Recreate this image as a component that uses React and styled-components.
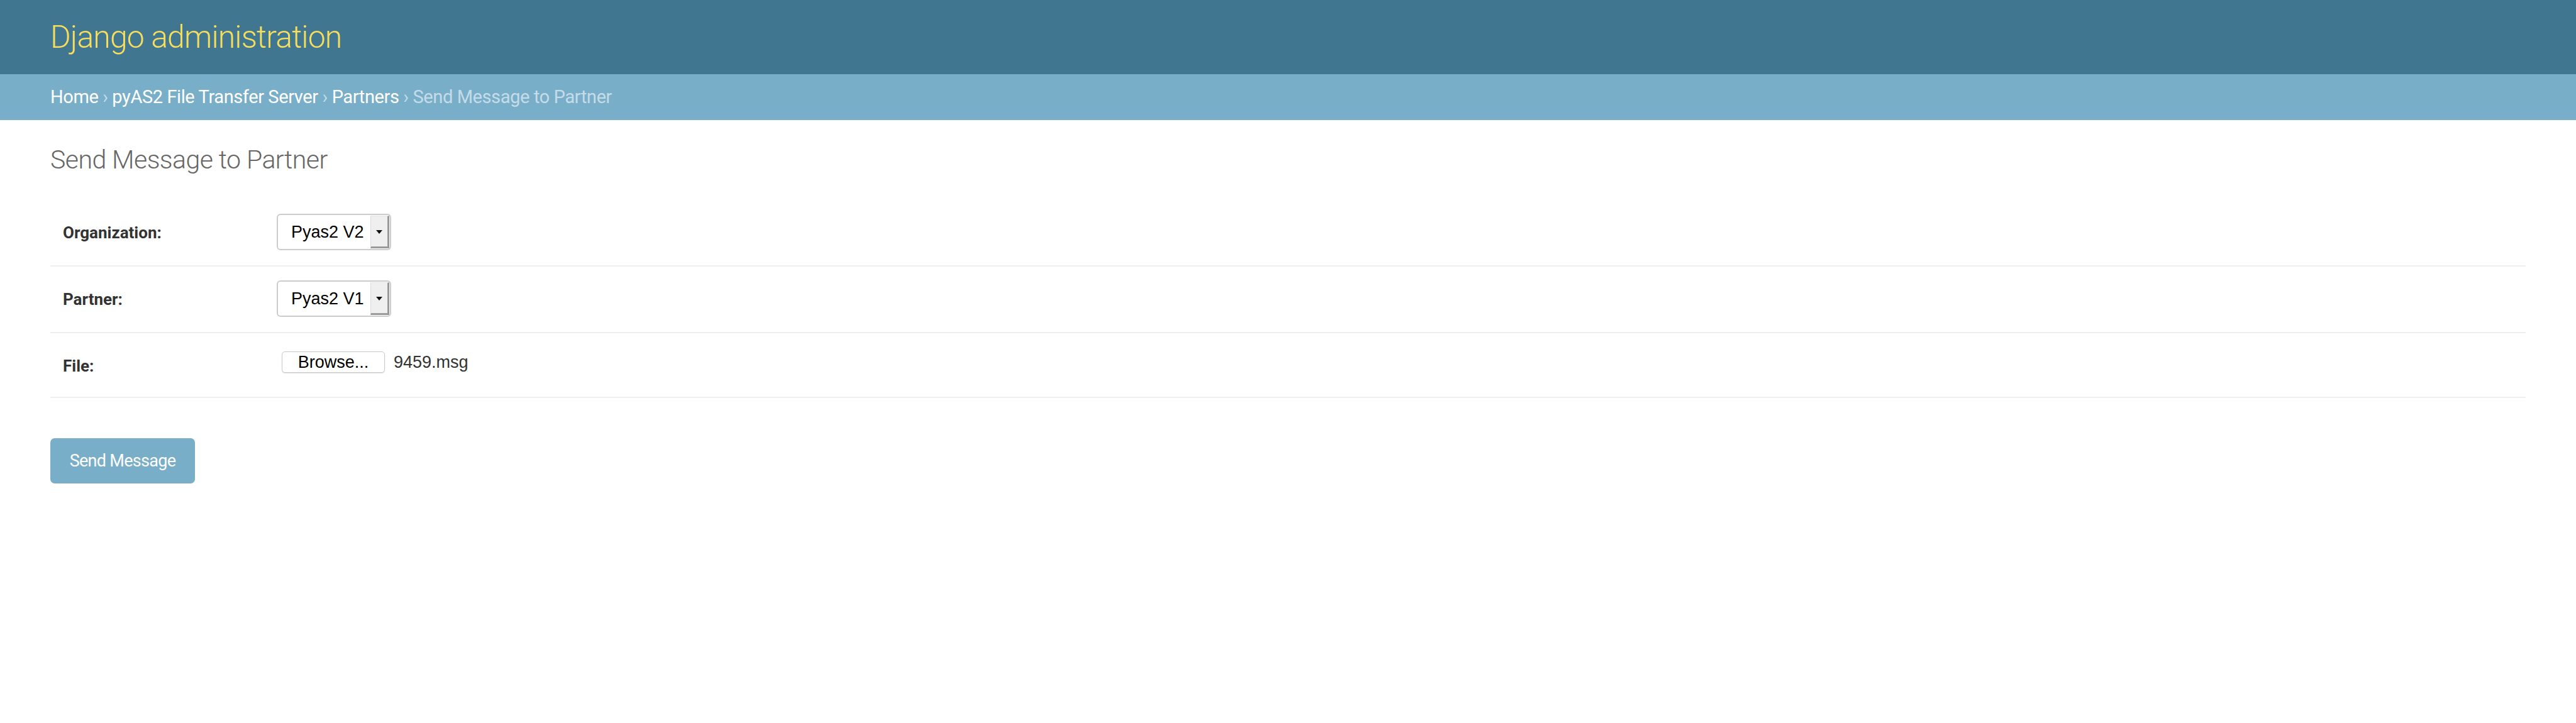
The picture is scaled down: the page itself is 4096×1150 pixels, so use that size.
import React from "react";
import styled, { createGlobalStyle } from "styled-components";

const GlobalStyle = createGlobalStyle`
  html, body {
    margin: 0;
    padding: 0;
    background: #ffffff;
    font-family: Roboto, "Liberation Sans", Arial, sans-serif;
    color: #333333;
  }
  * { box-sizing: border-box; }
`;

const Header = styled.header`
  background: #417690;
  height: 118px;
  padding: 30px 80px 0;
`;

const Branding = styled.h1`
  margin: 0;
  font-family: Roboto, sans-serif;
  font-weight: 300;
  font-size: 50px;
  line-height: 59px;
  letter-spacing: -0.9px;
  color: #f5dd5d;
`;

const Breadcrumbs = styled.nav`
  background: #79aec8;
  height: 73px;
  padding: 19px 80px 0;
  font-family: Roboto, sans-serif;
  font-size: 29px;
  line-height: 34px;
  letter-spacing: -0.4px;
  color: #c4dce8;
  white-space: pre;
`;

const Crumb = styled.a`
  color: #ffffff;
  text-decoration: none;
`;

const Content = styled.main`
  padding: 39px 80px 0;
`;

const Title = styled.h1`
  margin: 0 0 40px;
  font-family: Roboto, sans-serif;
  font-weight: 300;
  font-size: 41px;
  line-height: 48px;
  letter-spacing: -0.55px;
  color: #666666;
`;

const Fieldset = styled.fieldset`
  margin: 0;
  padding: 0;
  border: none;
  min-width: 0;
`;

const Row = styled.div`
  display: flex;
  align-items: flex-start;
  padding: 22px 20px ${(p) => p.$pb ?? 24}px;
  border-bottom: 2px solid #eeeeee;
`;

const Label = styled.label`
  width: 340px;
  flex-shrink: 0;
  font-family: Roboto, sans-serif;
  font-weight: 700;
  font-size: 26px;
  line-height: 60px;
  height: 58px;
  color: #333333;
`;

const SelectBox = styled.div`
  display: flex;
  align-items: stretch;
  width: 182px;
  height: 58px;
  border: 2px solid #cccccc;
  border-radius: 6px;
  background: #ffffff;
  overflow: hidden;
`;

const SelectValue = styled.span`
  flex: 1;
  display: flex;
  align-items: center;
  padding: 0 0 0 21px;
  font-family: "Liberation Sans", Arial, sans-serif;
  font-size: 27px;
  color: #000000;
  white-space: nowrap;
`;

const ArrowBox = styled.span`
  width: 30px;
  margin: 1px 1px 1px 0;
  display: flex;
  align-items: center;
  justify-content: center;
  background: #efefef;
  border-left: 1px solid #dcdcdc;
  border-top: 1px solid #e4e4e4;
  border-right: 3px solid #9a9a9a;
  border-bottom: 3px solid #9a9a9a;
`;

const Caret = styled.span`
  width: 0;
  height: 0;
  border-left: 5px solid transparent;
  border-right: 5px solid transparent;
  border-top: 6px solid #111111;
  margin-top: 2px;
`;

const FileField = styled.div`
  display: flex;
  align-items: center;
  margin-top: 7px;
  padding-left: 8px;
`;

const BrowseButton = styled.span`
  display: inline-flex;
  align-items: center;
  justify-content: center;
  width: 164px;
  height: 34px;
  border: 1px solid #c9c9c9;
  border-radius: 5px;
  background: #ffffff;
  box-shadow: 0 1px 1px rgba(0, 0, 0, 0.12);
  font-family: "Liberation Sans", Arial, sans-serif;
  font-size: 27px;
  color: #000000;
`;

const FileName = styled.span`
  margin-left: 14px;
  font-family: "Liberation Sans", Arial, sans-serif;
  font-size: 27px;
  color: #333333;
`;

const SubmitRow = styled.div`
  margin-top: 64px;
`;

const SubmitButton = styled.button`
  width: 230px;
  height: 72px;
  border: none;
  border-radius: 7px;
  background: #79aec8;
  color: #ffffff;
  font-family: Roboto, sans-serif;
  font-size: 27px;
  letter-spacing: -0.7px;
  padding: 0;
  cursor: pointer;
`;

function Select({ value }) {
  return (
    <SelectBox>
      <SelectValue>{value}</SelectValue>
      <ArrowBox>
        <Caret />
      </ArrowBox>
    </SelectBox>
  );
}

export default function App() {
  return (
    <>
      <GlobalStyle />
      <Header>
        <Branding>Django administration</Branding>
      </Header>
      <Breadcrumbs>
        <Crumb href="#">Home</Crumb>
        {" › "}
        <Crumb href="#">pyAS2 File Transfer Server</Crumb>
        {" › "}
        <Crumb href="#">Partners</Crumb>
        {" › "}
        Send Message to Partner
      </Breadcrumbs>
      <Content>
        <Title>Send Message to Partner</Title>
        <form onSubmit={(e) => e.preventDefault()}>
          <Fieldset>
            <Row>
              <Label>Organization:</Label>
              <Select value="Pyas2 V2" />
            </Row>
            <Row>
              <Label>Partner:</Label>
              <Select value="Pyas2 V1" />
            </Row>
            <Row $pb={21}>
              <Label>File:</Label>
              <FileField>
                <BrowseButton>Browse...</BrowseButton>
                <FileName>9459.msg</FileName>
              </FileField>
            </Row>
          </Fieldset>
          <SubmitRow>
            <SubmitButton type="submit">Send Message</SubmitButton>
          </SubmitRow>
        </form>
      </Content>
    </>
  );
}
